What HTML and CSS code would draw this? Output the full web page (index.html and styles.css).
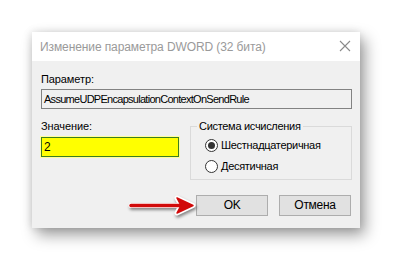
FILE: index.html
```html
<!DOCTYPE html>
<html lang="ru">
<head>
<meta charset="utf-8">
<title>DWORD</title>
<link rel="stylesheet" href="styles.css">
</head>
<body>
<div class="stage">
  <div class="dialog">
    <div class="titlebar">
      <span class="title">Изменение параметра DWORD (32 бита)</span>
      <svg class="close" width="12" height="12" viewBox="0 0 12 12"><path d="M1 1L11 11M11 1L1 11" stroke="#8a8a8a" stroke-width="1.1" fill="none"/></svg>
    </div>
    <div class="content">
      <div class="label">Параметр:</div>
      <div class="field readonly">AssumeUDPEncapsulationContextOnSendRule</div>
      <div class="row">
        <div class="value-col">
          <div class="label">Значение:</div>
          <div class="field yellow">2</div>
        </div>
        <fieldset class="group">
          <legend>Система исчисления</legend>
          <div class="radio"><span class="dot checked"></span>Шестнадцатеричная</div>
          <div class="radio second"><span class="dot"></span>Десятичная</div>
        </fieldset>
      </div>
      <div class="buttons">
        <div class="btn ok">OK</div>
        <div class="btn">Отмена</div>
      </div>
    </div>
  </div>
  <svg class="arrow" width="74" height="26" viewBox="0 0 74 26">
    <g stroke="#ffffff" stroke-width="5" stroke-linejoin="round" stroke-linecap="round" fill="#ffffff">
      <path d="M5 12.5H58"/>
      <path d="M51 5L67 12.5L51 20L55 12.5Z"/>
    </g>
    <g stroke="#d10a0a" stroke-linejoin="round" stroke-linecap="round" fill="#d10a0a">
      <path d="M5 12.5H58" stroke-width="3.4"/>
      <path d="M51 5L67 12.5L51 20L55 12.5Z" stroke-width="1.5"/>
    </g>
  </svg>
</div>
</body>
</html>
```
FILE: styles.css
```css
* { box-sizing: border-box; }
html, body { margin: 0; padding: 0; background: #ffffff; }
body {
  font-family: "Liberation Sans", Arial, sans-serif;
  font-size: 11px;
  letter-spacing: -0.3px;
  color: #000;
}
.stage {
  position: relative;
  width: 393px;
  height: 260px;
  padding: 32px 0 0 32px;
}
.dialog {
  width: 328px;
  height: 196px;
  background: #f0f0f0;
  box-shadow: 5px 7px 14px rgba(0,0,0,0.38), -1px 0 8px rgba(0,0,0,0.12);
  display: flex;
  flex-direction: column;
}
.titlebar {
  height: 29px;
  background: #ffffff;
  display: flex;
  align-items: center;
  justify-content: space-between;
  padding: 0 8px 0 8px;
}
.title {
  color: #9a9a9a;
  font-size: 12px;
  letter-spacing: -0.1px;
}
.close { margin-right: 1px; margin-top: -2px; }
.content {
  padding: 10px 8px 0 9px;
  display: flex;
  flex-direction: column;
}
.label {
  height: 16px;
  line-height: 16px;
  letter-spacing: -0.1px;
}
.field {
  height: 20px;
  line-height: 18px;
  padding: 0 2px;
}
.readonly {
  margin-top: 2px;
  border: 1px solid #828282;
  background: #f0f0f0;
  letter-spacing: -0.72px;
}
.row {
  margin-top: 9px;
  display: flex;
  gap: 11px;
}
.value-col {
  width: 138px;
  display: flex;
  flex-direction: column;
}
.yellow {
  margin-top: 3px;
  background: #ffff00;
  border: 1px solid #3b7d22;
  box-shadow: 0 0 0 1px #ffff9a;
  font-size: 12px;
}
.group {
  width: 162px;
  margin: 0;
  border: 1px solid #dadada;
  padding: 0 0 5px 14px;
  height: 62px;
}
.group legend {
  padding: 0 2px;
  margin-left: -8px;
  height: 16px;
  line-height: 16px;
}
.radio {
  display: flex;
  align-items: center;
  gap: 3px;
  height: 16px;
  margin-top: 3px;
}
.radio.second { margin-top: 5px; }
.dot {
  width: 13px;
  height: 13px;
  border-radius: 50%;
  border: 1px solid #333333;
  background: #ffffff;
  display: flex;
  align-items: center;
  justify-content: center;
}
.dot.checked::after {
  content: "";
  width: 7px;
  height: 7px;
  border-radius: 50%;
  background: #333333;
}
.buttons {
  margin-top: 15px;
  display: flex;
  justify-content: flex-end;
  gap: 11px;
  padding-right: 1px;
}
.btn {
  width: 72px;
  height: 21px;
  line-height: 19px;
  text-align: center;
  background: #e1e1e1;
  border: 1px solid #adadad;
  font-size: 12px;
}
.arrow {
  position: absolute;
  left: 126px;
  top: 193px;
  filter: drop-shadow(1px 2px 1.5px rgba(0,0,0,0.45));
}
```
